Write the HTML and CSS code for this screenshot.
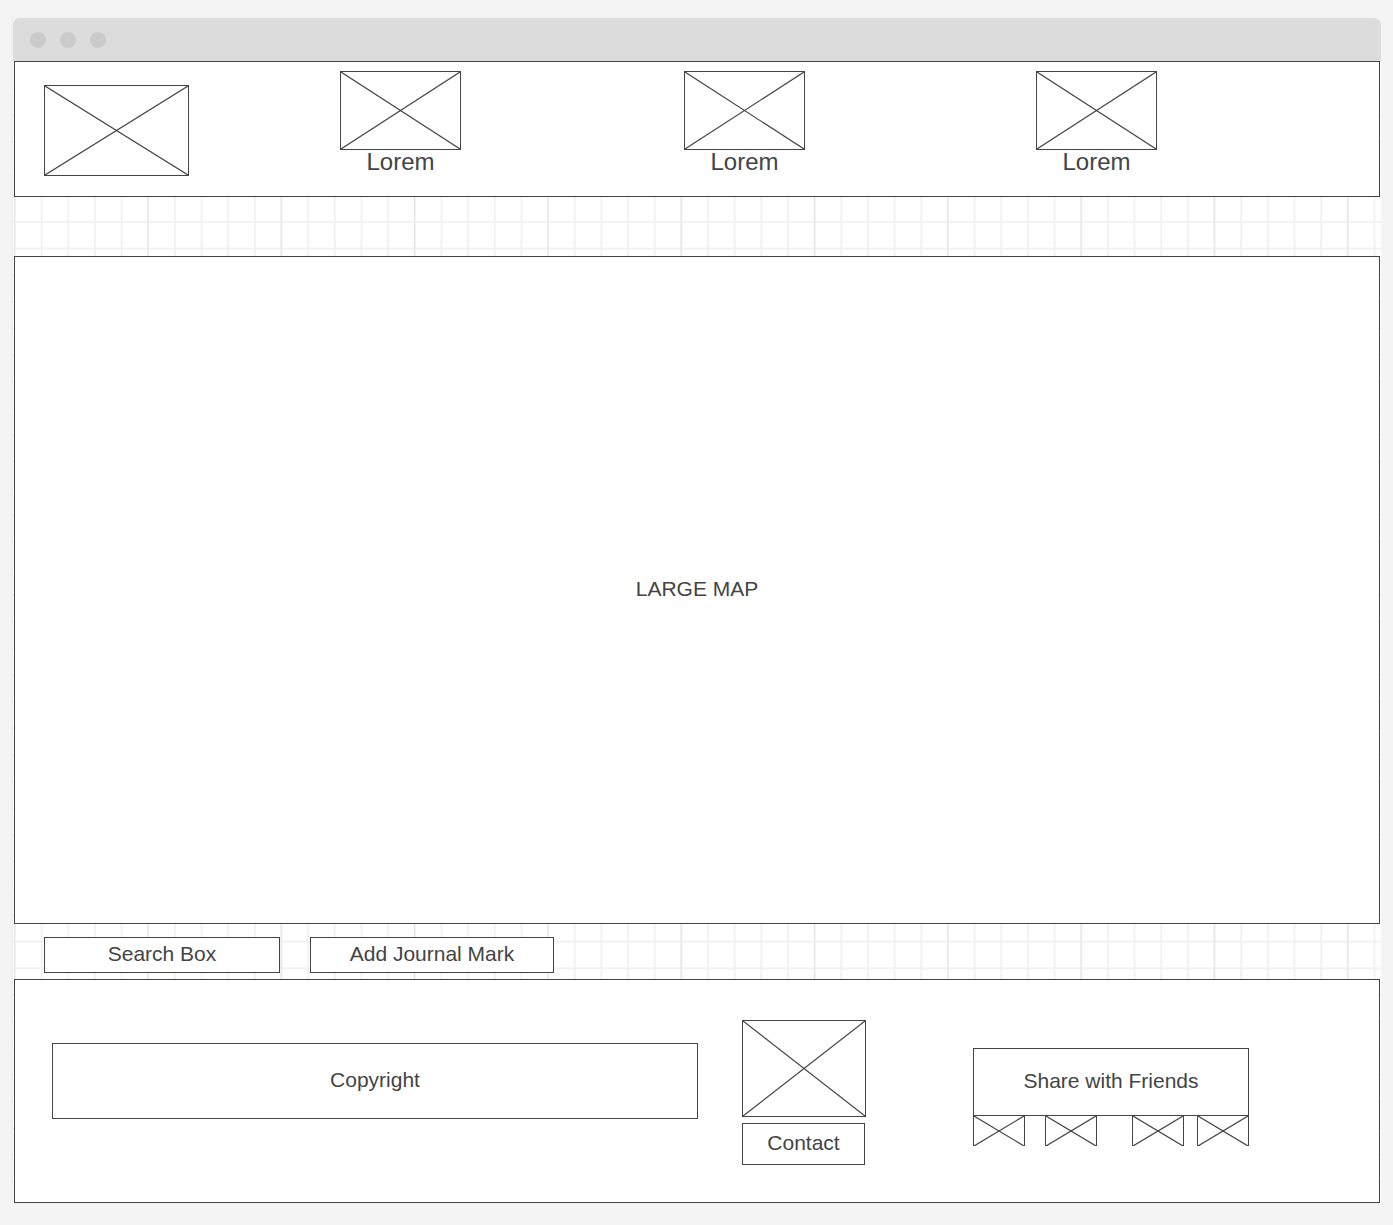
FILE: index.html
```html
<!DOCTYPE html>
<html lang="en">
<head>
  <meta charset="UTF-8" />
  <title>Journal Map - Wireframe</title>
  <link rel="stylesheet" href="styles.css">
</head>
<body>
  <div class="window">
    <div class="titlebar">
      <span class="dot"></span>
      <span class="dot"></span>
      <span class="dot"></span>
    </div>

    <div class="canvas">
      <header class="top">
        <div class="ph logo">
          <svg viewBox="0 0 100 100" preserveAspectRatio="none"><line x1="0" y1="0" x2="100" y2="100"/><line x1="100" y1="0" x2="0" y2="100"/></svg>
        </div>
        <nav class="menu">
          <a class="menu-item">
            <span class="ph menu-img"><svg viewBox="0 0 100 100" preserveAspectRatio="none"><line x1="0" y1="0" x2="100" y2="100"/><line x1="100" y1="0" x2="0" y2="100"/></svg></span>
            <span class="menu-label">Lorem</span>
          </a>
          <a class="menu-item">
            <span class="ph menu-img"><svg viewBox="0 0 100 100" preserveAspectRatio="none"><line x1="0" y1="0" x2="100" y2="100"/><line x1="100" y1="0" x2="0" y2="100"/></svg></span>
            <span class="menu-label">Lorem</span>
          </a>
          <a class="menu-item">
            <span class="ph menu-img"><svg viewBox="0 0 100 100" preserveAspectRatio="none"><line x1="0" y1="0" x2="100" y2="100"/><line x1="100" y1="0" x2="0" y2="100"/></svg></span>
            <span class="menu-label">Lorem</span>
          </a>
        </nav>
      </header>

      <div class="spacer"></div>

      <main class="map">LARGE MAP</main>

      <div class="toolbar">
        <div class="box search">Search Box</div>
        <div class="box journal">Add Journal Mark</div>
      </div>

      <footer class="footer">
        <div class="box copyright">Copyright</div>

        <div class="contact">
          <div class="ph contact-img">
            <svg viewBox="0 0 100 100" preserveAspectRatio="none"><line x1="0" y1="0" x2="100" y2="100"/><line x1="100" y1="0" x2="0" y2="100"/></svg>
          </div>
          <div class="box contact-btn">Contact</div>
        </div>

        <div class="share">
          <div class="box share-box">Share with Friends</div>
          <div class="share-icons">
            <span class="ph social"><svg viewBox="0 0 100 100" preserveAspectRatio="none"><line x1="0" y1="0" x2="100" y2="100"/><line x1="100" y1="0" x2="0" y2="100"/></svg></span>
            <span class="ph social"><svg viewBox="0 0 100 100" preserveAspectRatio="none"><line x1="0" y1="0" x2="100" y2="100"/><line x1="100" y1="0" x2="0" y2="100"/></svg></span>
            <span class="ph social"><svg viewBox="0 0 100 100" preserveAspectRatio="none"><line x1="0" y1="0" x2="100" y2="100"/><line x1="100" y1="0" x2="0" y2="100"/></svg></span>
            <span class="ph social"><svg viewBox="0 0 100 100" preserveAspectRatio="none"><line x1="0" y1="0" x2="100" y2="100"/><line x1="100" y1="0" x2="0" y2="100"/></svg></span>
          </div>
        </div>
      </footer>
    </div>
  </div>
</body>
</html>
```

FILE: styles.css
```css
body {
  margin: 0;
  font-family: 'Liberation Sans', Arial, sans-serif;
  background: #f4f4f4;
  color: #444;
}
.window {
  margin: 18px 0 0 13px;
  width: 1368px;
  box-shadow: -1px 0 2px rgba(0,0,0,0.04);
}
.titlebar {
  height: 43px;
  background: #dcdcdc;
  border-radius: 7px 7px 0 0;
  display: flex;
  align-items: center;
  gap: 14px;
  padding-left: 17px;
  box-sizing: border-box;
}
.dot {
  width: 16px;
  height: 16px;
  border-radius: 50%;
  background: #cacaca;
}
.canvas {
  padding: 0 1px;
  background-color: #fff;
  background-image:
    linear-gradient(to right, #e4e4e4 1px, transparent 1px),
    linear-gradient(to bottom, #e4e4e4 1px, transparent 1px),
    linear-gradient(to right, #f2f2f2 2px, transparent 2px),
    linear-gradient(to bottom, #f2f2f2 2px, transparent 2px);
  background-size: 133.33px 133.33px, 133.33px 133.33px, 26.67px 26.67px, 26.67px 26.67px;
  background-position: 1px 0;
}

/* placeholders */
.ph {
  display: block;
  border: 1px solid #444;
  background: #fff;
  box-sizing: border-box;
}
.ph svg {
  display: block;
  width: 100%;
  height: 100%;
}
.ph line {
  stroke: #444;
  stroke-width: 1.2;
  vector-effect: non-scaling-stroke;
}
.box {
  border: 1px solid #444;
  background: #fff;
  box-sizing: border-box;
  display: flex;
  align-items: center;
  justify-content: center;
  font-size: 21px;
  padding-bottom: 2px;
}

/* header */
.top {
  display: flex;
  align-items: flex-start;
  height: 136px;
  box-sizing: border-box;
  border: 1px solid #444;
  background: #fff;
  padding-left: 29px;
}
.logo {
  width: 145px;
  height: 91px;
  margin-top: 23px;
}
.menu {
  display: flex;
  gap: 223px;
  margin-left: 151px;
  margin-top: 9px;
}
.menu-item {
  display: flex;
  flex-direction: column;
  align-items: center;
  width: 121px;
  text-decoration: none;
  color: #444;
}
.menu-item:last-child {
  margin-left: 8px;
}
.menu-img {
  width: 121px;
  height: 79px;
}
.menu-label {
  font-size: 24px;
  line-height: 24px;
}

.spacer {
  height: 59px;
}

/* map */
.map {
  height: 668px;
  box-sizing: border-box;
  border: 1px solid #444;
  background: #fff;
  display: flex;
  align-items: center;
  justify-content: center;
  font-size: 21px;
  padding-bottom: 2px;
}

/* toolbar */
.toolbar {
  height: 55px;
  display: flex;
  align-items: flex-start;
  gap: 30px;
  padding: 13px 0 0 30px;
  box-sizing: border-box;
}
.search {
  width: 236px;
  height: 36px;
}
.journal {
  width: 244px;
  height: 36px;
}

/* footer */
.footer {
  height: 224px;
  box-sizing: border-box;
  border: 1px solid #444;
  background: #fff;
  display: flex;
  align-items: flex-start;
}
.copyright {
  width: 646px;
  height: 76px;
  margin: 63px 0 0 37px;
}
.contact {
  margin: 40px 0 0 44px;
  width: 124px;
}
.contact-img {
  width: 124px;
  height: 97px;
}
.contact-btn {
  width: 123px;
  height: 42px;
  margin-top: 6px;
}
.share {
  margin: 68px 0 0 107px;
  width: 276px;
}
.share-box {
  height: 68px;
}
.share-icons {
  display: flex;
  margin-top: -1px;
}
.social {
  width: 52px;
  height: 31px;
  border-bottom: none;
}
.social:nth-child(2) {
  margin-left: 20px;
}
.social:nth-child(3) {
  margin-left: 35px;
}
.social:nth-child(4) {
  margin-left: 13px;
}
```
